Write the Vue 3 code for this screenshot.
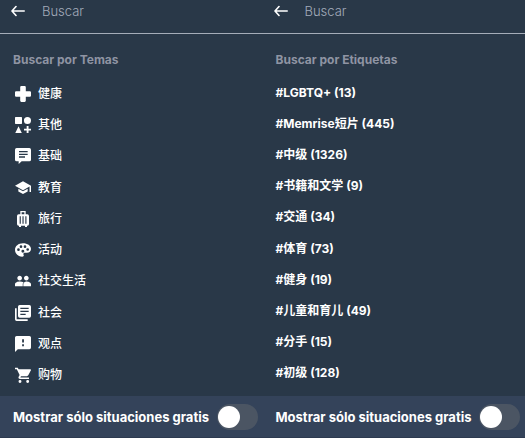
<template>
  <main class="screens">
    <section v-for="panel in panels" :key="panel.id" class="panel">
      <header class="search">
        <button type="button" class="back" aria-label="Volver">
          <svg viewBox="0 0 14 14" width="14" height="14">
            <path d="M13.200 7H1.200M5 2.500L1 7l4 4.500" />
          </svg>
        </button>
        <input
          v-model="panel.query"
          type="text"
          class="query"
          placeholder="Buscar"
          aria-label="Buscar"
        />
      </header>

      <h2>{{ panel.title }}</h2>

      <ul :class="['list', panel.id]">
        <li v-for="item in panel.items" :key="item.label">
          <a href="#">
            <svg v-if="item.icon" class="icon" viewBox="0 0 24 24">
              <path :d="item.icon" fill-rule="evenodd" />
            </svg>
            <span>{{ item.label }}</span>
          </a>
        </li>
      </ul>

      <footer class="free">
        <label :for="'free-' + panel.id">Mostrar sólo situaciones gratis</label>
        <input
          :id="'free-' + panel.id"
          v-model="panel.onlyFree"
          type="checkbox"
          class="switch"
        />
      </footer>
    </section>
  </main>
</template>

<script setup>
import { reactive } from 'vue'

const topics = [
  {
    label: '健康',
    icon: 'M9.5 0h5a1.7 1.7 0 0 1 1.7 1.7v6.1h6.1A1.7 1.7 0 0 1 24 9.5v5a1.7 1.7 0 0 1-1.7 1.7h-6.1v6.1a1.7 1.7 0 0 1-1.7 1.7h-5a1.7 1.7 0 0 1-1.7-1.7v-6.1H1.7A1.7 1.7 0 0 1 0 14.5v-5a1.7 1.7 0 0 1 1.7-1.7h6.1V1.7A1.7 1.7 0 0 1 9.5 0z',
  },
  {
    label: '其他',
    icon: 'M1 0h8.500a1 1 0 0 1 1 1v8.500a1 1 0 0 1-1 1H1a1 1 0 0 1-1-1V1a1 1 0 0 1 1-1zM18.700 0a5.300 5.300 0 1 1 0 10.600a5.300 5.300 0 1 1 0-10.600zM5.300 14l4.900 10H.4zM17.500 13.500h2.800v4h3.700v2.800h-3.700V24h-2.800v-3.700h-4v-2.800h4z',
  },
  {
    label: '基础',
    icon: 'M2.500 0h19A2.500 2.500 0 0 1 24 2.500v15a2.500 2.500 0 0 1-2.500 2.500H10l-4.500 4v-4h-3A2.500 2.500 0 0 1 0 17.500v-15A2.500 2.500 0 0 1 2.500 0zM6 4.500v2h13v-2zM6 8.500v2h13v-2zM6 12.500v2h9v-2z',
  },
  {
    label: '教育',
    icon: 'M5 13.180v4L12 21l7-3.820v-4L12 17l-7-3.820zM12 2L0 8.700l12 6.500 9.800-5.300V18H24V8.700L12 2z',
  },
  {
    label: '旅行',
    icon: 'M8 0h8v5h2.500A2.500 2.500 0 0 1 21 7.500v12a2.500 2.500 0 0 1-2.500 2.500H18v2h-3v-2H9v2H6v-2h-.5A2.500 2.500 0 0 1 3 19.500v-12A2.500 2.500 0 0 1 5.500 5H8zM10 2v3h4V2zM7 8v11h1.700V8zM11.200 8v11h1.700V8zM15.500 8v11h1.700V8z',
  },
  {
    label: '活动',
    icon: 'M12 2C5 2 0 6.200 0 12c0 5.600 5 10 11 10c2 0 2.700-1.500 1.800-3c-.8-1.500.2-3 2-3H18c3.500 0 6-2.300 6-5.500C24 5.500 18.700 2 12 2zM5.200 9.500a2 2 0 1 1 0 4a2 2 0 1 1 0-4zM9 5a2 2 0 1 1 0 4a2 2 0 1 1 0-4zM15 5a2 2 0 1 1 0 4a2 2 0 1 1 0-4zM19 9.200a2 2 0 1 1 0 4a2 2 0 1 1 0-4zM11.800 11.800a2.200 2.200 0 1 1 0 4.400a2.200 2.200 0 1 1 0-4.400z',
  },
  {
    label: '社交生活',
    icon: 'M17 11.200c2 0 3.500-1.600 3.500-3.600S19 4 17 4 13.500 5.600 13.500 7.600s1.500 3.600 3.500 3.600zM7 11.200c2 0 3.500-1.600 3.500-3.600S9 4 7 4 3.500 5.600 3.500 7.600 5 11.200 7 11.200zM7 12.800c-2.500 0-7 1.200-7 4V20h11.600v-3.200c0-1.300.4-2.300 1.400-3C11.300 13.100 9 12.800 7 12.800zM17 12.800c-2 0-4.500 1.300-4.500 4V20H24v-3.200c0-2.800-4.500-4-7-4z',
  },
  {
    label: '社会',
    icon: 'M0 5h2.500v16.500H19V24H2.500A2.500 2.500 0 0 1 0 21.500zM7 0h14.500A2.500 2.500 0 0 1 24 2.500v14a2.500 2.500 0 0 1-2.500 2.500H7a2.500 2.500 0 0 1-2.500-2.500v-14A2.500 2.500 0 0 1 7 0zM8 4v2h12.500V4zM8 8.500v2h12.500v-2zM8 13v2h8v-2z',
  },
  {
    label: '观点',
    icon: 'M2.400 0h19.200A2.400 2.400 0 0 1 24 2.400v15a2.400 2.400 0 0 1-2.400 2.400H4.200L0 24V2.400A2.400 2.400 0 0 1 2.400 0zM10.700 4.700v5h2.700v-5zM10.700 12.500v3h2.700v-3z',
  },
  {
    label: '购物',
    icon: 'M7.500 19.500a2.200 2.200 0 1 1 0 4.400a2.200 2.200 0 1 1 0-4.400zM19 19.500a2.200 2.200 0 1 1 0 4.400a2.200 2.200 0 1 1 0-4.400zM0 1h4.200l1.200 2.500H23c.8 0 1.200.8.9 1.400l-4 7.600c-.4.800-1.100 1.200-2 1.200H9l-1 2h13V18H7.500c-2 0-2.900-1.800-2-3.400l1.400-2.500L2.700 3.200H0z',
  },
]

const tags = [
  '#LGBTQ+ (13)',
  '#Memrise短片 (445)',
  '#中级 (1326)',
  '#书籍和文学 (9)',
  '#交通 (34)',
  '#体育 (73)',
  '#健身 (19)',
  '#儿童和育儿 (49)',
  '#分手 (15)',
  '#初级 (128)',
]

const panels = reactive([
  { id: 'topics', title: 'Buscar por Temas', items: topics, query: '', onlyFree: false },
  {
    id: 'tags',
    title: 'Buscar por Etiquetas',
    items: tags.map((label) => ({ label })),
    query: '',
    onlyFree: false,
  },
])
</script>

<style>
body {
  margin: 0;
  background: #293848;
}
</style>

<style scoped>
.screens {
  display: grid;
  grid-template-columns: 1fr 1fr;
  min-height: 100vh;
  background: #293848;
  color: #fff;
  font-family: Inter, "Noto Sans CJK SC", sans-serif;
}
.panel {
  display: flex;
  flex-direction: column;
  min-width: 0;
}
.search {
  display: flex;
  align-items: center;
  gap: 17px;
  padding: 0 11px 11px;
  border-bottom: 1px solid #a5adb9;
}
.back {
  display: flex;
  padding: 0;
  border: none;
  background: none;
  cursor: pointer;
}
.back path {
  fill: none;
  stroke: #fff;
  stroke-width: 1.6;
  stroke-linecap: round;
  stroke-linejoin: round;
}
.query {
  flex: 1;
  min-width: 0;
  height: 22px;
  padding: 0;
  border: none;
  outline: none;
  background: none;
  color: #fff;
  font-family: inherit;
  font-size: 13px;
  font-weight: 300;
}
.query::placeholder {
  color: #a3abba;
  opacity: 1;
}
h2 {
  margin: 0;
  padding: 17px 13px 8px;
  color: #8f94a3;
  font-size: 12px;
  font-weight: 700;
  line-height: 18px;
}
.list {
  flex: 1;
  display: grid;
  grid-auto-rows: 1fr;
  margin: 0;
  padding: 0 13px 7px;
  list-style: none;
}
.topics {
  padding-top: 1px;
  padding-bottom: 5px;
}
.list li {
  display: flex;
  align-items: center;
}
.list a {
  display: flex;
  align-items: center;
  gap: 7px;
  padding-left: 2px;
  color: #fff;
  font-size: 12px;
  font-weight: 700;
  line-height: 18px;
  text-decoration: none;
  white-space: nowrap;
}
.topics a {
  font-weight: 500;
}
.tags a {
  padding-left: 0;
}
.icon {
  width: 16px;
  height: 16px;
  fill: #fff;
}
.free {
  display: flex;
  align-items: center;
  justify-content: space-between;
  padding: 8px 5px 7px 13px;
  border-bottom: 1px solid #2d3a50;
  background: #34435a;
}
.free label {
  font-size: 13px;
  font-weight: 700;
  line-height: 18px;
  white-space: nowrap;
}
.switch {
  appearance: none;
  flex: none;
  display: flex;
  align-items: center;
  width: 41px;
  height: 26px;
  margin: 0;
  padding: 0 1px;
  border-radius: 13px;
  background: #4b5563;
  cursor: pointer;
}
.switch::before {
  content: "";
  width: 22px;
  height: 22px;
  border-radius: 50%;
  background: #fff;
}
.switch:checked {
  justify-content: flex-end;
  background: #4caf50;
}
</style>
